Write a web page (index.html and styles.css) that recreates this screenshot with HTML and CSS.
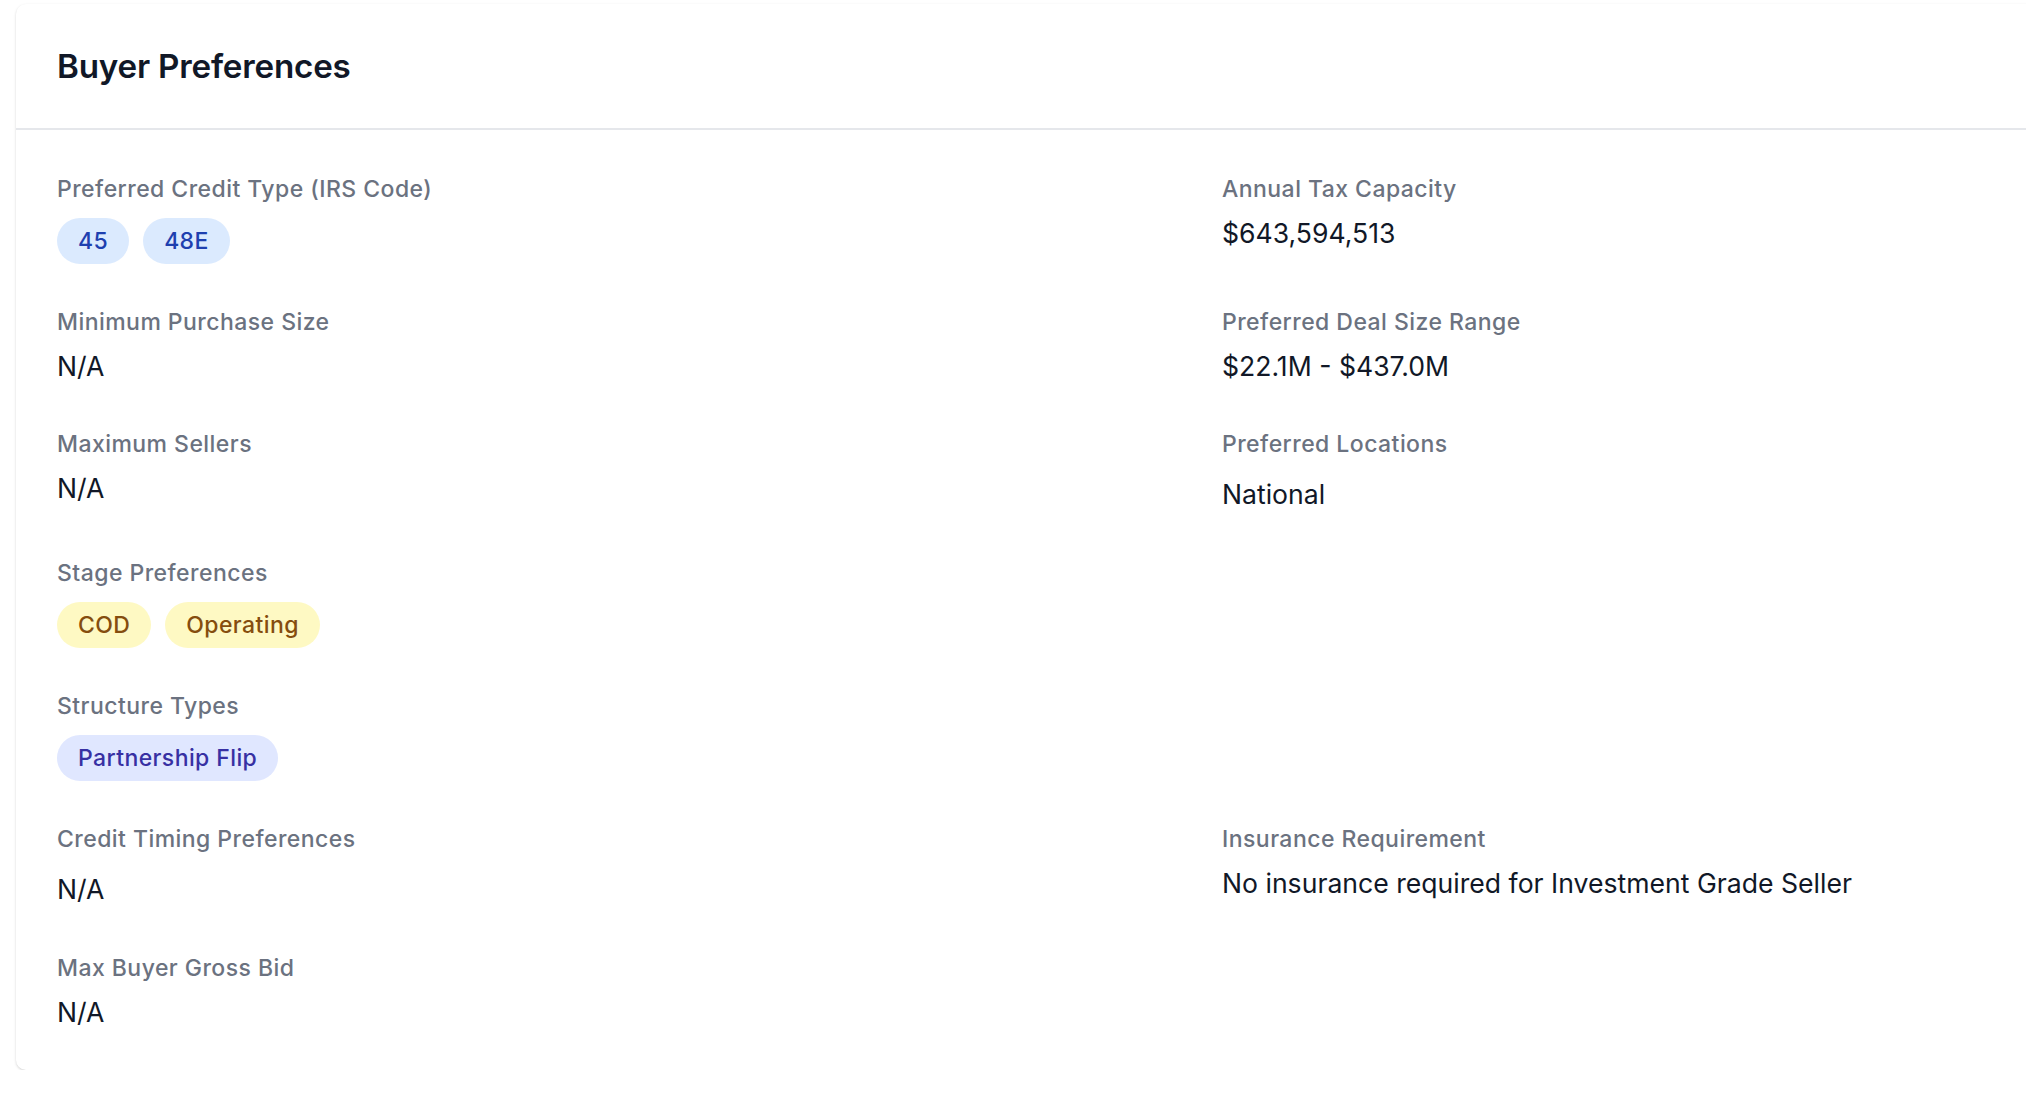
FILE: index.html
```html
<!DOCTYPE html>
<html lang="en">
<head>
<meta charset="utf-8">
<title>Buyer Preferences</title>
<link rel="stylesheet" href="styles.css">
</head>
<body>
<div class="page">
  <section class="card">
    <header class="card-header">
      <h2 class="card-title">Buyer Preferences</h2>
    </header>
    <div class="card-body">
      <div class="field">
        <div class="field-label">Preferred Credit Type (IRS Code)</div>
        <div class="badges">
          <span class="badge badge-blue">45</span>
          <span class="badge badge-blue">48E</span>
        </div>
      </div>
      <div class="field">
        <div class="field-label">Annual Tax Capacity</div>
        <div class="field-value">$643,594,513</div>
      </div>

      <div class="field">
        <div class="field-label">Minimum Purchase Size</div>
        <div class="field-value">N/A</div>
      </div>
      <div class="field">
        <div class="field-label">Preferred Deal Size Range</div>
        <div class="field-value">$22.1M - $437.0M</div>
      </div>

      <div class="field">
        <div class="field-label">Maximum Sellers</div>
        <div class="field-value">N/A</div>
      </div>
      <div class="field">
        <div class="field-label">Preferred Locations</div>
        <div class="badges"><span class="field-value plain">National</span></div>
      </div>

      <div class="field">
        <div class="field-label">Stage Preferences</div>
        <div class="badges">
          <span class="badge badge-yellow">COD</span>
          <span class="badge badge-yellow">Operating</span>
        </div>
      </div>
      <div class="field empty"></div>

      <div class="field">
        <div class="field-label">Structure Types</div>
        <div class="badges">
          <span class="badge badge-indigo">Partnership Flip</span>
        </div>
      </div>
      <div class="field empty"></div>

      <div class="field">
        <div class="field-label">Credit Timing Preferences</div>
        <div class="badges"><span class="field-value plain">N/A</span></div>
      </div>
      <div class="field">
        <div class="field-label">Insurance Requirement</div>
        <div class="field-value">No insurance required for Investment Grade Seller</div>
      </div>

      <div class="field">
        <div class="field-label">Max Buyer Gross Bid</div>
        <div class="field-value">N/A</div>
      </div>
      <div class="field empty"></div>
    </div>
  </section>
</div>
</body>
</html>
```

FILE: styles.css
```css
html, body {
  margin: 0;
  padding: 0;
  background: #ffffff;
  overflow: hidden;
}

body {
  font-family: Inter, "Noto Sans", "Liberation Sans", sans-serif;
  color: #111827;
}

.page {
  padding: 4px 0 0 16px;
}

.card {
  width: 2100px;
  background: #ffffff;
  border-radius: 10px;
  box-shadow: 0 1px 3px rgba(0, 0, 0, 0.12), 0 1px 2px rgba(0, 0, 0, 0.06);
}

.card-header {
  height: 124px;
  display: flex;
  align-items: center;
  padding: 0 41px;
  border-bottom: 2px solid #e5e7eb;
}

.card-title {
  margin: 0;
  font-size: 33.2px;
  line-height: 44px;
  font-weight: 600;
  color: #111827;
  letter-spacing: -0.2px;
}

.card-body {
  display: grid;
  grid-template-columns: 1117px 1fr;
  column-gap: 48px;
  row-gap: 42px;
  padding: 43px 41px 38px;
}

.field-label {
  font-size: 23px;
  line-height: 32px;
  color: #6b7280;
  font-weight: 500;
  letter-spacing: 0.45px;
}

.field-value {
  margin-top: 8px;
  font-size: 26.6px;
  line-height: 40px;
  color: #111827;
}

.field-value.plain {
  margin-top: 0;
  line-height: 42px;
}

.badges {
  display: flex;
  flex-wrap: wrap;
  gap: 14px;
  margin-top: 13px;
}

.badge {
  display: inline-flex;
  align-items: center;
  height: 46px;
  padding: 0 21px;
  border-radius: 9999px;
  font-size: 23px;
  font-weight: 500;
  line-height: 32px;
  letter-spacing: 0.4px;
}

.badge-blue {
  background: #dbeafe;
  color: #1e40af;
}

.badge-yellow {
  background: #fef9c3;
  color: #854d0e;
}

.badge-indigo {
  background: #e0e7ff;
  color: #3730a3;
}
```
